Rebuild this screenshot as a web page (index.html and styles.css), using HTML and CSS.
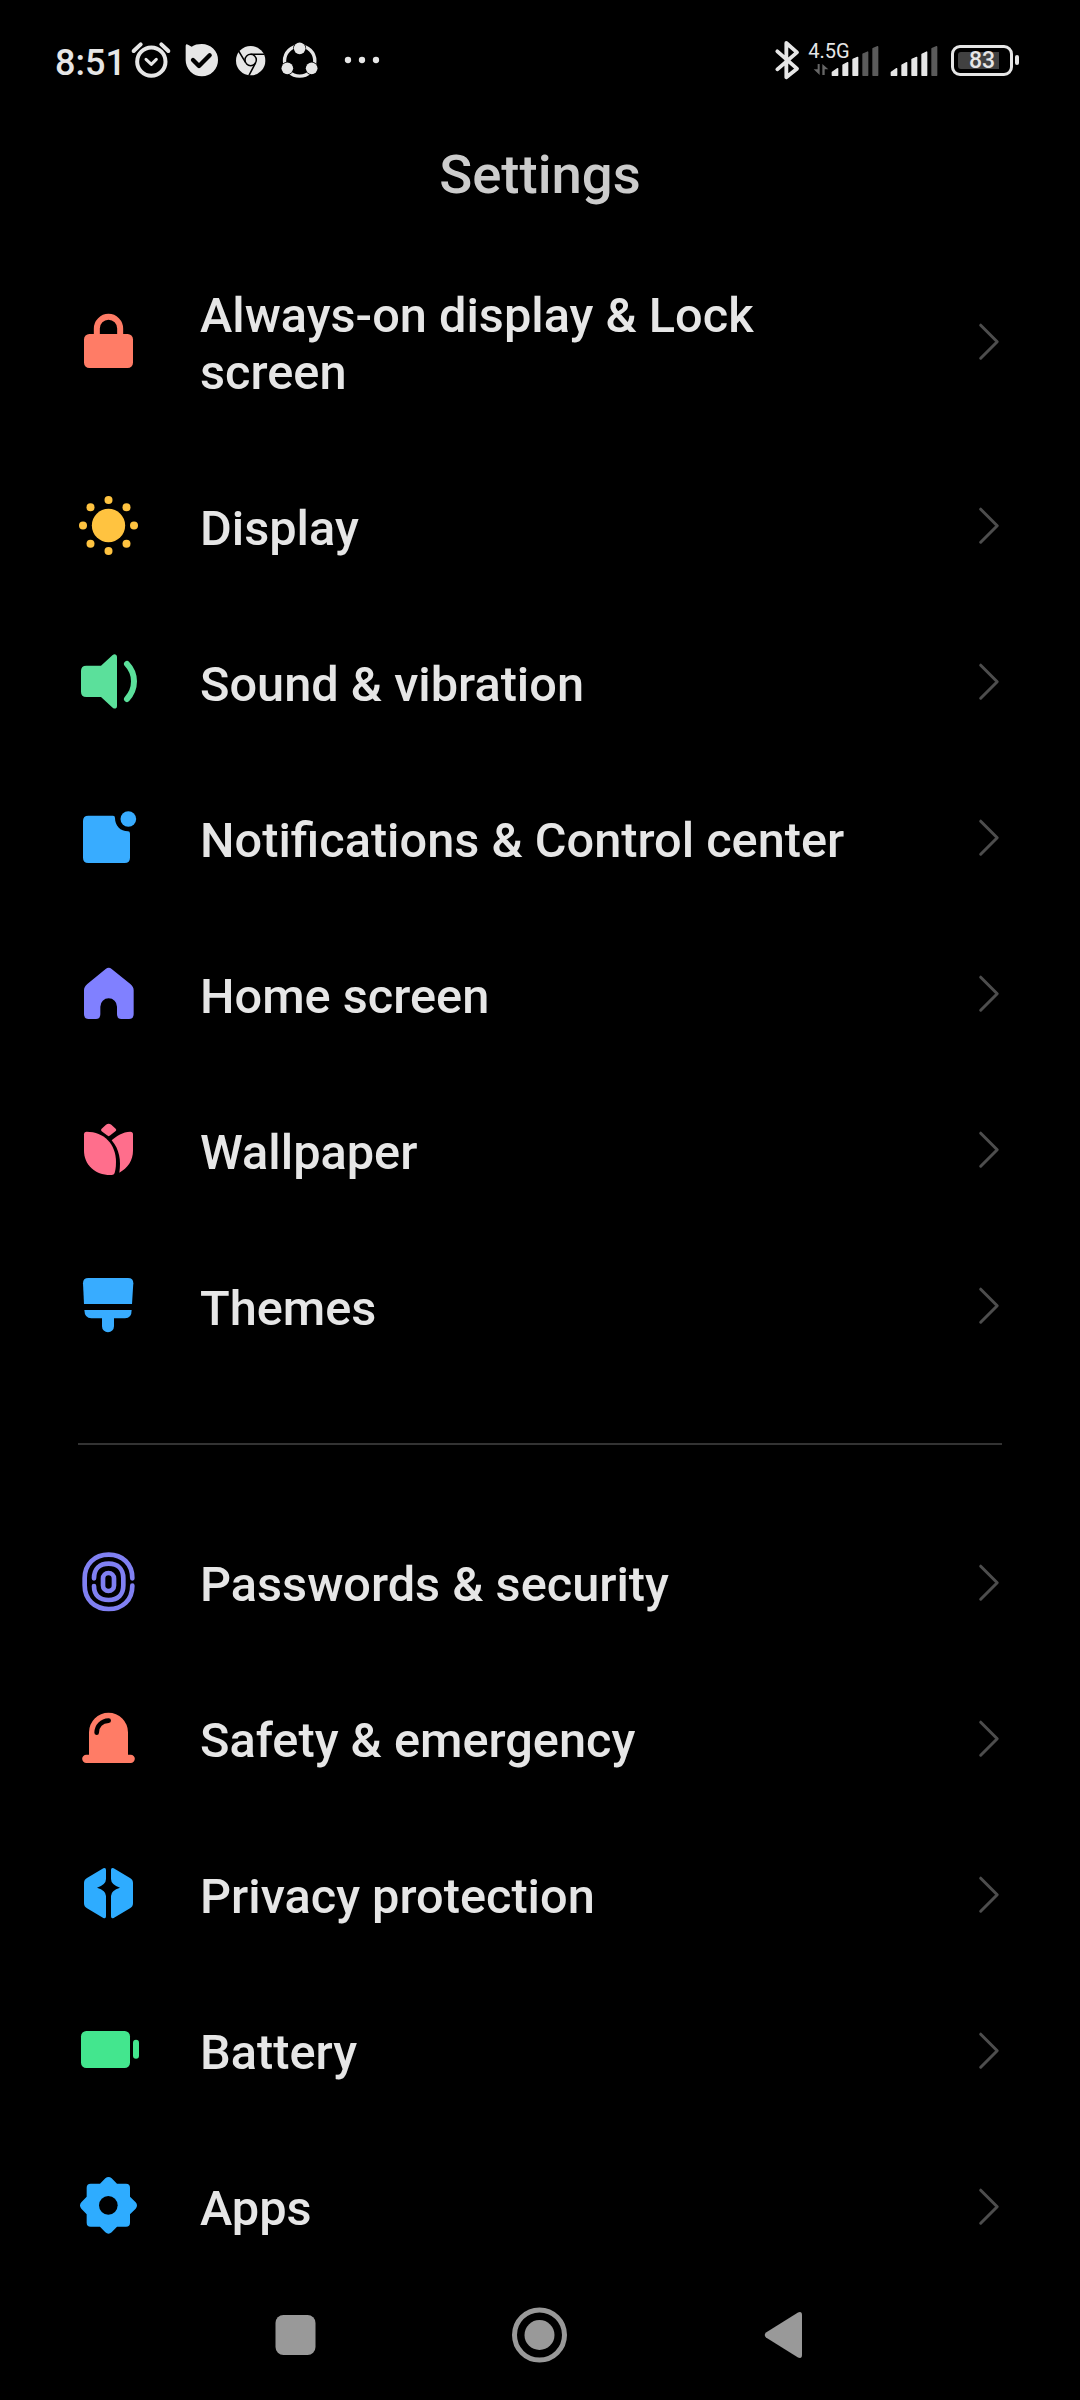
FILE: index.html
```html
<!DOCTYPE html>
<html lang="en">
<head>
<meta charset="utf-8">
<title>Settings</title>
<link rel="stylesheet" href="styles.css">
</head>
<body>
<svg width="0" height="0" class="defs"><defs>
  <symbol id="chev" viewBox="0 0 24 40"><path d="M2.700 4.200L19.200 20.700L2.700 37.200" fill="none" stroke="#4d4d4d" stroke-width="3" stroke-linecap="round" stroke-linejoin="round"/></symbol>
</defs></svg>
<header class="status">
  <span class="clock">8:51</span>
  <svg class="status-left" viewBox="270 0 760 210">
    <g fill="none" stroke="#e6e6e6" stroke-linecap="round">
      <circle cx="334" cy="110" r="42.500" stroke-width="12"/>
      <path d="M281 78L302 58M364 58L385 78" stroke-width="12"/>
      <path d="M318 103L334 118L349 103" stroke-width="9" stroke-linejoin="round"/>
    </g>
    <path d="M437 62Q438 55 444 59L455 65C463 59 474 57 485 57A48.500 48.500 0 1 1 437 106Z" fill="#e6e6e6"/>
    <path d="M459 105L477 123L509 91" fill="none" stroke="#000" stroke-width="13" stroke-linecap="round" stroke-linejoin="round"/>
    <circle cx="632" cy="107" r="44" fill="#e6e6e6"/>
    <g fill="none" stroke="#000" stroke-width="4.500">
      <circle cx="632" cy="105" r="17"/>
      <path d="M632 88H672M617 113L596 78M647 113L627 151"/>
    </g>
    <circle cx="779" cy="108" r="45.500" fill="none" stroke="#e6e6e6" stroke-width="10"/>
    <g fill="#e6e6e6" stroke="#000" stroke-width="4" paint-order="stroke">
      <circle cx="779" cy="70" r="17.500"/><circle cx="742" cy="130" r="17.500"/><circle cx="815" cy="130" r="17.500"/>
    </g>
    <g fill="#e6e6e6"><circle cx="924" cy="105" r="9.500"/><circle cx="966" cy="105" r="9.500"/><circle cx="1008" cy="105" r="9.500"/></g>
  </svg>
  <div class="status-right">
    <svg class="bt" viewBox="40 0 90 210"><path d="M53 79L112 131L80 157V54L112 82L53 133" fill="none" stroke="#e6e6e6" stroke-width="11.500" stroke-linecap="round" stroke-linejoin="round"/></svg>
    <div class="net">
      <svg viewBox="140 0 400 210">
        <g fill="#666"><path d="M172 117H178V150L160 133H172ZM186 150V117L204 133H193V150Z"/></g>
        <g fill="#e6e6e6" stroke="#e6e6e6" stroke-width="4" stroke-linejoin="round">
          <path d="M216 142L232 131V151H216ZM248 120L262 113V151H248ZM278 103L292 97V151H278Z"/>
          <path d="M393 142L409 131V151H393ZM425 120L439 113V151H425ZM455 103L469 97V151H455ZM485 88L499 81V151H485Z"/>
        </g>
        <path d="M308 87L322 81V151H308ZM338 71L352 65V151H338ZM515 71L529 65V151H515Z" fill="#5b5b5b" stroke="#5b5b5b" stroke-width="4" stroke-linejoin="round"/>
      </svg>
      <span class="gen">4.5G</span>
    </div>
    <div class="batt"><span class="level"></span><span class="pct">83</span></div>
    <span class="nub"></span>
  </div>
</header>
<h1 class="title">Settings</h1>
<main class="list">
  <a class="row tall"><svg class="icon" viewBox="54 63 180 180"><rect x="72" y="132" width="147" height="102" rx="16" fill="#ff7c66"/><path d="M110.500 138V115.500A35 35 0 0 1 180.500 115.500V138" fill="none" stroke="#ff7c66" stroke-width="18"/></svg><span class="label">Always-on display &amp; Lock screen</span><svg class="chev"><use href="#chev"/></svg></a>
  <a class="row"><svg class="icon" viewBox="54 615 180 180"><g fill="#ffc340"><circle cx="145.500" cy="706.500" r="50"/><circle cx="145.500" cy="630" r="12"/><circle cx="145.500" cy="783" r="12"/><circle cx="69" cy="706.500" r="12"/><circle cx="222" cy="706.500" r="12"/><circle cx="91.500" cy="652" r="12"/><circle cx="199.500" cy="652" r="12"/><circle cx="91.500" cy="761" r="12"/><circle cx="199.500" cy="761" r="12"/></g></svg><span class="label">Display</span><svg class="chev"><use href="#chev"/></svg></a>
  <a class="row"><svg class="icon" viewBox="54 63 180 180"><path d="M79 107H123L158 75Q163 71 168 74Q171 76 171 81V228Q171 233 168 235Q163 237 158 233L123 201H79Q63 201 63 185V123Q63 107 79 107Z" fill="#5be09b"/><path d="M201 102Q222 124 222 154Q222 184 201 207" fill="none" stroke="#5be09b" stroke-width="18" stroke-linecap="round"/></svg><span class="label">Sound &amp; vibration</span><svg class="chev"><use href="#chev"/></svg></a>
  <a class="row"><svg class="icon" viewBox="54 531 180 180"><path d="M85 557H159Q165 557 165 564C165 587 181 604 204 604Q210 604 210 611V683Q210 699 194 699H85Q69 699 69 683V573Q69 557 85 557Z" fill="#38acff"/><circle cx="205" cy="567" r="23.500" fill="#38acff"/></svg><span class="label">Notifications &amp; Control center</span><svg class="chev"><use href="#chev"/></svg></a>
  <a class="row"><svg class="icon" viewBox="54 69 180 180"><path d="M137 87Q146 80 155 87L211 132Q221 140 221 151V223Q221 237 207 237H184Q171 237 171 223V200A25 25 0 0 0 121 200V223Q121 237 108 237H86Q72 237 72 223V151Q72 140 82 132Z" fill="#8080ff"/></svg><span class="label">Home screen</span><svg class="chev"><use href="#chev"/></svg></a>
  <a class="row"><svg class="icon" viewBox="54 537 180 180"><g fill="#ff6e8c"><path d="M138 554Q146 549 154 554L167 566Q171 570 167 573L151 586Q146 591 141 586L125 574Q121 570 125 566Z"/><path d="M80 575C132 575 168 612 168 666C168 682 166 692 164 699Q162 705 155 705H151C104 705 72 673 72 632V583Q72 575 80 575Z"/><path d="M155 601C170 587 188 576 211 575Q219 575 219 583V632C219 661 203 684 178 698C184 662 178 627 155 601Z"/></g></svg><span class="label">Wallpaper</span><svg class="chev"><use href="#chev"/></svg></a>
  <a class="row"><svg class="icon" viewBox="54 75 180 180"><g fill="#38acff"><path d="M85 84H204Q220 84 220 100L216 162H72L69 100Q69 84 85 84Z"/><path d="M73 180H215Q215 205 195 205H162V229A17.500 17.500 0 0 1 126 229V205H94Q74 205 73 180Z"/></g></svg><span class="label">Themes</span><svg class="chev"><use href="#chev"/></svg></a>
  <hr class="rule">
  <section class="group">
  <a class="row"><svg class="icon" viewBox="54 66 180 180"><g fill="none" stroke="#8080f2" stroke-width="14" stroke-linecap="round"><path d="M217 145C217 101 187 74 146 74C104 74 74 102 74 145V166C74 209 104 237 146 237C187 237 217 211 217 167"/><path d="M102 145C102 116 119 101 146 101C174 101 190 118 190 145V166C190 193 174 210 146 210C119 210 102 196 102 168"/><rect x="129" y="129" width="33" height="54" rx="16.500"/></g></svg><span class="label">Passwords &amp; security</span><svg class="chev"><use href="#chev"/></svg></a>
  <a class="row"><svg class="icon" viewBox="54 534 180 180"><path d="M87 674V607A58.500 58.500 0 0 1 204 607V674H212A12.500 12.500 0 0 1 212 699H79A12.500 12.500 0 0 1 79 674Z" fill="#ff7c66"/><path d="M110 608C111 587 125 573 146 572" fill="none" stroke="#000" stroke-width="14" stroke-linecap="round"/></svg><span class="label">Safety &amp; emergency</span><svg class="chev"><use href="#chev"/></svg></a>
  <a class="row"><svg class="icon" viewBox="54 72 180 180"><g fill="#2eacff"><path d="M138 90Q138 82 130 85L81 114Q72 119 72 129V190Q72 200 81 205L130 234Q138 237 138 229V168Q138 151 111 143Q138 134 138 117Z"/><path d="M153 90Q153 82 161 85L210 114Q219 119 219 129V190Q219 200 210 205L161 234Q153 237 153 229V168Q153 151 180 143Q153 134 153 117Z"/></g></svg><span class="label">Privacy protection</span><svg class="chev"><use href="#chev"/></svg></a>
  <a class="row"><svg class="icon" viewBox="54 540 180 180"><g fill="#43e68e"><rect x="63" y="573" width="147" height="111" rx="16"/><rect x="219" y="599" width="18" height="57" rx="9"/></g></svg><span class="label">Battery</span><svg class="chev"><use href="#chev"/></svg></a>
  <a class="row"><svg class="icon" viewBox="54 78 180 180"><path d="M136 85Q145.500 77 155 85L171 101H198Q210 101 210 113V140L227 157Q235 166.500 227 176L210 193V218Q210 230 198 230H171L155 247Q145.500 255 136 247L120 230H92Q80 230 80 218V193L64 176Q56 166.500 64 157L80 140V113Q80 101 92 101H120Z" fill="#2eacff"/><circle cx="145" cy="166" r="28" fill="#000"/></svg><span class="label">Apps</span><svg class="chev"><use href="#chev"/></svg></a>
  </section>
</main>
<nav class="nav">
  <svg viewBox="0 0 60 60"><rect x="9.500" y="10" width="40" height="40" rx="8" fill="#999"/></svg>
  <svg viewBox="0 0 60 60"><circle cx="29.500" cy="30" r="25" fill="none" stroke="#999" stroke-width="5"/><circle cx="29.500" cy="30" r="15" fill="#999"/></svg>
  <svg viewBox="0 0 60 60"><path d="M48 10V50Q48 54 44 52.500L12 32.500Q9.500 30 12 27.500L44 7.500Q48 6 48 10Z" fill="#999"/></svg>
</nav>
</body>
</html>
```
FILE: styles.css
```css
* { box-sizing: border-box; }
body { margin: 0; width: 1080px; height: 2400px; background: #000; color: #e6e6e6; font-family: Roboto, "Noto Sans", sans-serif; overflow: hidden; display: flex; flex-direction: column; }
svg { display: block; overflow: visible; flex: none; }
.defs { position: absolute; }
.status { height: 95px; padding: 25px 61px 0 55px; display: flex; }
.clock { width: 75px; font-size: 36px; line-height: 42px; font-weight: 500; padding-top: 17px; white-space: nowrap; }
.status-left { width: 253.33px; height: 70px; }
.status-right { display: flex; margin-left: auto; height: 70px; }
.bt { width: 30px; height: 70px; margin-right: 4px; }
.net { position: relative; width: 133.33px; }
.net svg { width: 133.33px; height: 70px; }
.gen { position: absolute; left: 1px; top: 14px; font-size: 20px; line-height: 24px; }
.batt { position: relative; width: 62px; height: 31px; margin: 20px 0 0 10.5px; border: 3px solid #e6e6e6; border-radius: 9px; display: flex; align-items: center; justify-content: center; }
.level { position: absolute; left: 4px; top: 4px; width: 41px; height: 17px; background: #414141; border-radius: 3px 0 0 3px; }
.pct { position: relative; font-size: 23px; line-height: 25px; font-weight: 500; }
.nub { width: 4px; height: 10px; margin: 30px 0 0 2px; border-radius: 2px; background: #e6e6e6; }
.title { margin: 0; height: 140px; padding-top: 47px; text-align: center; font-size: 54.5px; line-height: 64px; font-weight: 500; color: #ccc; }
.list { display: flex; flex-direction: column; }
.row { height: 156px; padding: 0 78px; display: flex; align-items: center; }
.row.tall { height: 212px; }
.icon { width: 60px; height: 60px; }
.label { width: 660px; margin-left: 62px; padding-top: 7px; font-size: 48.7px; line-height: 57px; font-weight: 500; }
.tall .label { padding-top: 6px; }
.group .label { padding-top: 5px; }
.chev { width: 24px; height: 40px; margin-left: auto; }
.group .chev { margin-bottom: 1px; }
.rule { width: 924px; height: 2px; margin: 60px 78px 59px; border: 0; background: #333; }
.nav { flex: 1; display: flex; justify-content: space-between; padding: 21px 266px 0; }
.nav svg { width: 60px; height: 60px; }
```
